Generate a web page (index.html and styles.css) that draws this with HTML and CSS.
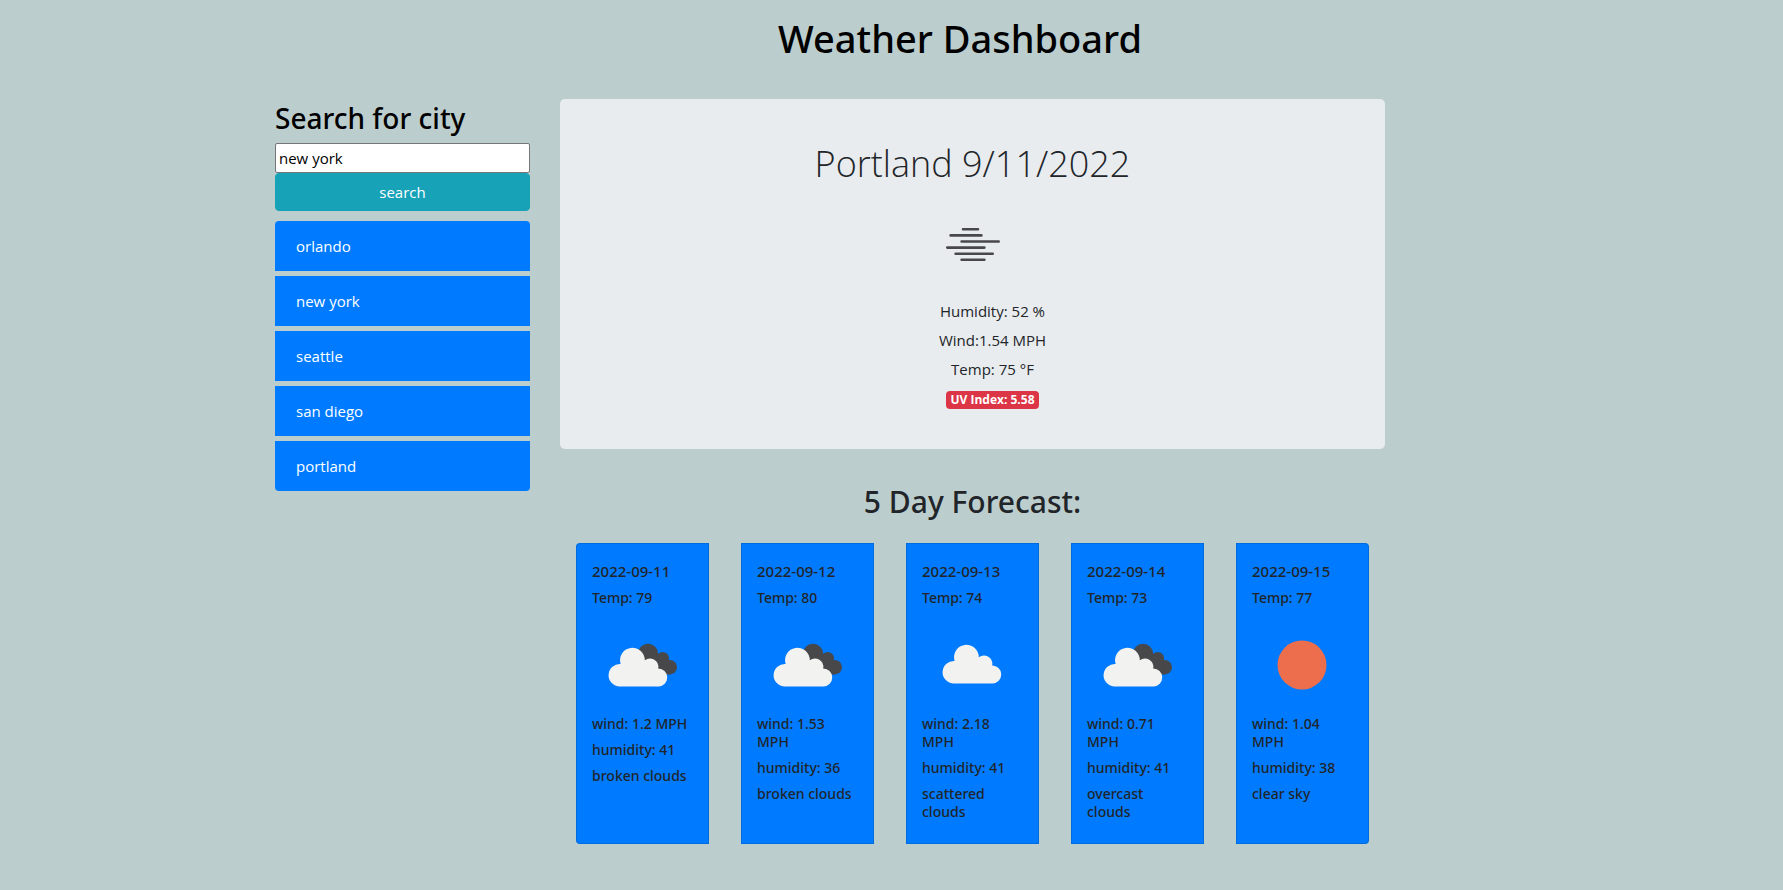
FILE: index.html
```html
<!DOCTYPE html>
<html lang="en">
<head>
<meta charset="utf-8">
<meta name="viewport" content="width=device-width, initial-scale=1">
<title>Weather Dashboard</title>
<link rel="stylesheet" href="styles.css">
</head>
<body>
<svg class="sprite" aria-hidden="true">
  <symbol id="cloud" viewBox="0 0 100 100">
    <path d="M27 71.4a11.2 11.2 0 0 1 1.6-22.4 12.4 12.4 0 1 1 24.2-3.8A8.5 8.5 0 0 1 66.2 53.6a8.9 8.9 0 0 1 .3 17.8z" fill="#f2f2f0"/>
  </symbol>
  <symbol id="scattered" viewBox="0 0 100 100">
    <use href="#cloud" x="4" y="-3" width="100" height="100"/>
  </symbol>
  <symbol id="broken" viewBox="0 0 100 100">
    <g fill="#48484a">
      <circle cx="56" cy="39" r="10.2"/><circle cx="70.7" cy="43.3" r="6.3"/><circle cx="77.8" cy="52.2" r="7.2"/>
      <path d="M56 39L70.7 40L77.8 46V59.4H70L50 50z"/>
    </g>
    <use href="#cloud" width="100" height="100"/>
  </symbol>
  <symbol id="sun" viewBox="0 0 100 100">
    <circle cx="50" cy="50" r="24.5" fill="#ec6e4c"/>
  </symbol>
</svg>
<div class="page">
  <header class="page-header"><h1>Weather Dashboard</h1></header>
  <div class="row">
    <aside class="sidebar">
      <form class="search">
        <h2><label for="city">Search for city</label></h2>
        <input id="city" class="search-input" type="text" value="new york">
        <button class="search-button" type="button">search</button>
      </form>
      <ul class="history">
        <li><button class="history-item" type="button">orlando</button></li>
        <li><button class="history-item" type="button">new york</button></li>
        <li><button class="history-item" type="button">seattle</button></li>
        <li><button class="history-item" type="button">san diego</button></li>
        <li><button class="history-item" type="button">portland</button></li>
      </ul>
    </aside>
    <main class="main">
      <section class="current">
        <h2 class="current-title">Portland 9/11/2022</h2>
        <svg class="icon" viewBox="0 0 100 100" role="img" aria-label="mist">
          <path d="M40 35.3H55M27.6 41.4H58.4M38.6 47.5H75.7M24.3 53.6H61.4M32.6 59.7H69.7M38.6 65.8H61.4" stroke="#48484a" stroke-width="2.6" stroke-linecap="round"/>
        </svg>
        <ul class="readings">
          <li>Humidity: 52 %</li>
          <li>Wind:1.54 MPH</li>
          <li>Temp: 75 °F</li>
          <li><span class="badge">UV Index: 5.58</span></li>
        </ul>
      </section>
      <h2 class="forecast-title">5 Day Forecast:</h2>
      <section class="forecast">
        <article class="card"><h3>2022-09-11</h3><p>Temp: 79</p><svg class="icon"><use href="#broken"/></svg><p>wind: 1.2 MPH</p><p>humidity: 41</p><p>broken clouds</p></article>
        <article class="card"><h3>2022-09-12</h3><p>Temp: 80</p><svg class="icon"><use href="#broken"/></svg><p>wind: 1.53 MPH</p><p>humidity: 36</p><p>broken clouds</p></article>
        <article class="card"><h3>2022-09-13</h3><p>Temp: 74</p><svg class="icon"><use href="#scattered"/></svg><p>wind: 2.18 MPH</p><p>humidity: 41</p><p>scattered clouds</p></article>
        <article class="card"><h3>2022-09-14</h3><p>Temp: 73</p><svg class="icon"><use href="#broken"/></svg><p>wind: 0.71 MPH</p><p>humidity: 41</p><p>overcast clouds</p></article>
        <article class="card"><h3>2022-09-15</h3><p>Temp: 77</p><svg class="icon"><use href="#sun"/></svg><p>wind: 1.04 MPH</p><p>humidity: 38</p><p>clear sky</p></article>
      </section>
    </main>
  </div>
</div>
</body>
</html>
```
FILE: styles.css
```css
*, *::before, *::after { box-sizing: border-box; }

body {
  margin: 0;
  background: #bccdcd;
  color: #212529;
  font-family: "Open Sans", "Noto Sans", sans-serif;
  font-size: 15px;
  line-height: 24px;
}

h1, h2, h3, p, ul { margin: 0; padding: 0; }
ul { list-style: none; }
button, input { font: inherit; }
.sprite { position: absolute; width: 0; height: 0; }

.page {
  max-width: 1263px;
  margin: 0 auto;
  padding-right: 123px;
}

.page-header {
  padding: 14px 0 37px 260px;
  text-align: center;
}

.page-header h1 {
  color: #000;
  font-family: "Noto Sans", "Open Sans", sans-serif;
  font-size: 38px;
  font-weight: 500;
  line-height: 48px;
}

.row {
  display: grid;
  grid-template-columns: 1fr 3fr;
}

.sidebar, .main { padding: 0 15px; }

.search { display: flex; flex-direction: column; }

.search h2 {
  color: #000;
  font-family: "Noto Sans", "Open Sans", sans-serif;
  font-size: 28px;
  font-weight: 500;
  line-height: 38px;
  padding-bottom: 6px;
}

.search-input {
  width: 100%;
  height: 30px;
  padding: 1px 3px;
  border: 1px solid #767676;
  border-radius: 2px;
  background: #fff;
  color: #000;
}

.search-button {
  height: 38px;
  border: 1px solid #17a2b8;
  border-radius: 4px;
  background: #17a2b8;
  color: #fff;
}

.history {
  display: grid;
  gap: 5px;
  margin-top: 10px;
  border-radius: 4px;
  overflow: hidden;
}

.history-item {
  display: block;
  width: 100%;
  padding: 13px 21px;
  border: 0;
  background: #007bff;
  color: #fff;
  text-align: left;
}

.current {
  padding: 41px 32px 39px;
  border-radius: 5px;
  background: #e9ecef;
  text-align: center;
}

.current-title {
  font-size: 36px;
  font-weight: 300;
  line-height: 48px;
  margin-bottom: 6px;
}

.icon { display: block; width: 100px; height: 100px; }
.current .icon { margin: 0 auto; }

.readings {
  display: grid;
  gap: 5px;
  padding: 5px 0 0 40px;
}

.badge {
  display: inline-block;
  padding: 0 4px;
  border-radius: 4px;
  background: #dc3545;
  color: #fff;
  font-size: 12px;
  font-weight: 700;
  line-height: 18px;
}

.forecast-title {
  padding: 33px 0 21px;
  font-family: "Noto Sans", "Open Sans", sans-serif;
  font-size: 30px;
  font-weight: 500;
  line-height: 40px;
  text-align: center;
}

.forecast {
  display: grid;
  grid-template-columns: repeat(5, 1fr);
  gap: 32px;
  padding: 0 16px;
}

.card {
  padding: 18px 15px 14px;
  border: 1px solid rgba(0, 0, 0, 0.125);
  background: #007bff;
  font-family: "Noto Sans", "Open Sans", sans-serif;
  font-size: 14px;
  font-weight: 500;
  line-height: 18px;
}

.card:first-child { border-radius: 4px 0 0 4px; }
.card:last-child { border-radius: 0 4px 4px 0; }
.card h3 { font-size: 15px; font-weight: 500; margin-bottom: 9px; }
.card p { margin-bottom: 8px; }
```
